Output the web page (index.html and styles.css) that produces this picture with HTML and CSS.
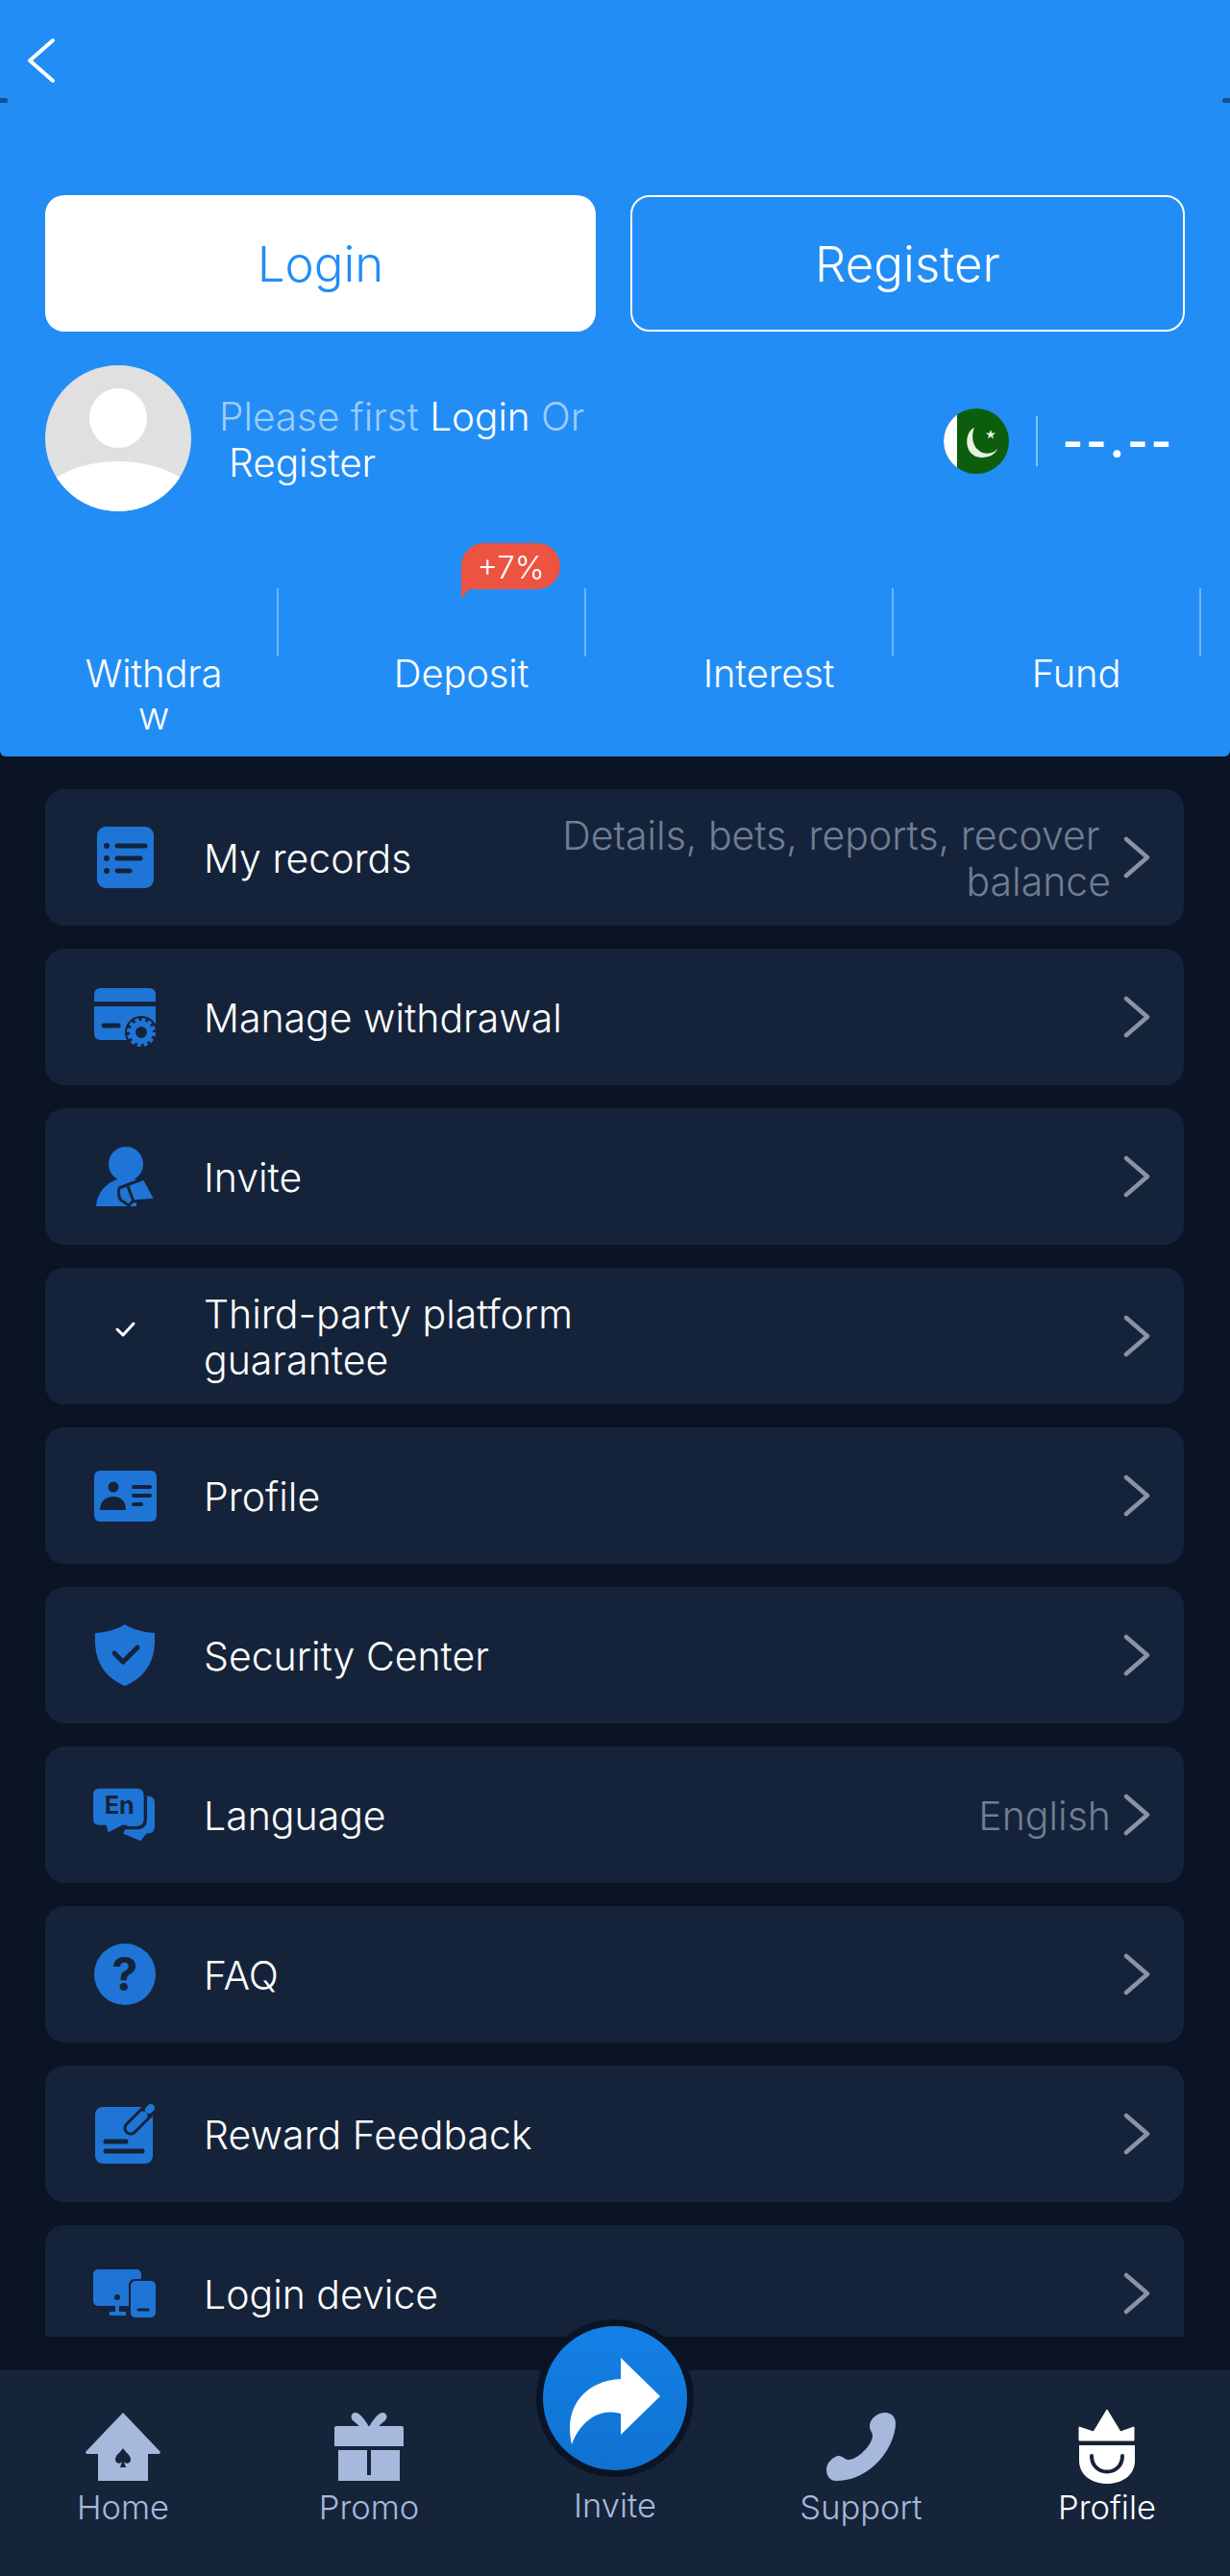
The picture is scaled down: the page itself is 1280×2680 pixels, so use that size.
FILE: index.html
```html
<!DOCTYPE html>
<html>
<head>
    <meta charset="utf-8">
    <title>Profile</title>
    <link rel="stylesheet" href="styles.css">
</head>
<body>
<div class="page">
    <header class="head">
        <span class="notch notch-left"></span>
        <span class="notch notch-right"></span>
        <div class="backbar">
            <svg class="back" viewBox="0 0 32 48" fill="none" stroke="#fff" stroke-width="4" stroke-linecap="round" stroke-linejoin="round"><path d="M28 3 L4 24 L28 45"/></svg>
        </div>
        <div class="auth">
            <button class="btn btn-login">Login</button>
            <button class="btn btn-register">Register</button>
        </div>
        <div class="user">
            <svg class="avatar" viewBox="0 0 152 152">
                <defs><clipPath id="avclip"><circle cx="76" cy="76" r="76"/></clipPath></defs>
                <circle cx="76" cy="76" r="76" fill="#e0e0e0"/>
                <ellipse cx="76" cy="55" rx="30" ry="31" fill="#fff"/>
                <ellipse cx="76" cy="150" rx="86" ry="50" fill="#fff" clip-path="url(#avclip)"/>
            </svg>
            <p class="hint">Please first <a class="hint-link">Login</a> Or <a class="hint-link hint-reg">Register</a></p>
            <div class="wallet">
                <svg class="flag" viewBox="0 0 68 68">
                    <defs><clipPath id="flagclip"><circle cx="34" cy="34" r="34"/></clipPath></defs>
                    <g clip-path="url(#flagclip)">
                        <rect width="68" height="68" fill="#0d5e0c"/>
                        <rect width="14" height="68" fill="#fff"/>
                        <path d="M32 20 C21 24 20 51 40 51 C48 51 54 47 56 42 C50 48 42 48 37 44 C29 38 29 27 32 20 Z" fill="#e6f2e2"/>
                        <path d="M49 22 L50.200 25.600 L54 25.600 L51 27.900 L52.100 31.500 L49 29.300 L45.900 31.500 L47 27.900 L44 25.600 L47.800 25.600 Z" fill="#e6f2e2"/>
                    </g>
                </svg>
                <span class="wallet-line"></span>
                <span class="amount">--.--</span>
            </div>
        </div>
        <div class="stats">
            <div class="stat"><span class="stat-name">Withdraw</span></div>
            <div class="stat">
                <span class="stat-name">Deposit</span>
                <span class="badge">+7%</span>
            </div>
            <div class="stat"><span class="stat-name">Interest</span></div>
            <div class="stat"><span class="stat-name">Fund</span></div>
        </div>
    </header>

    <main class="list">
        <div class="row">
            <svg class="row-icon" viewBox="0 0 64 64">
                <rect x="3" y="0" width="59" height="64" rx="9" fill="#1f75d6"/>
                <g fill="#14233a"><circle cx="13" cy="20" r="3"/><circle cx="13" cy="33" r="3"/><circle cx="13" cy="46" r="3"/></g>
                <g stroke="#14233a" stroke-width="5" stroke-linecap="round"><path d="M24 20 H53"/><path d="M24 33 H48"/><path d="M24 46 H37"/></g>
            </svg>
            <span class="row-name">My records</span>
            <span class="row-note row-note-wide">Details, bets, reports, recover&nbsp;<br>balance</span>
            <svg class="chev" viewBox="0 0 28 44" fill="none"><path d="M3 3 L25 22 L3 41"/></svg>
        </div>
        <div class="row">
            <svg class="row-icon" viewBox="0 0 64 64">
                <path d="M0 16 V9 Q0 2 7 2 H57 Q64 2 64 9 V16 Z" fill="#1f75d6"/>
                <path d="M0 21 H64 V56 H7 Q0 56 0 49 Z" fill="#1f75d6"/>
                <path d="M10 41 H25" stroke="#14233a" stroke-width="5" stroke-linecap="round"/>
                <circle cx="49" cy="48" r="17" fill="#14233a"/>
                <circle cx="49" cy="48" r="9" fill="none" stroke="#1f75d6" stroke-width="6"/>
                <circle cx="49" cy="48" r="13" fill="none" stroke="#1f75d6" stroke-width="4" stroke-dasharray="4 2.800"/>
            </svg>
            <span class="row-name">Manage withdrawal</span>
            <svg class="chev" viewBox="0 0 28 44" fill="none"><path d="M3 3 L25 22 L3 41"/></svg>
        </div>
        <div class="row">
            <svg class="row-icon" viewBox="0 0 64 64">
                <circle cx="33" cy="19" r="18" fill="#1f75d6"/>
                <path d="M2 63 C3 49 12 39 24 35 H44 V63 Z" fill="#1f75d6"/>
                <path d="M26 44 L52 34 L64 56 L40 58 L36 62 L30 58 C25 56 25 48 26 44 Z" fill="#1f75d6" stroke="#14233a" stroke-width="3" stroke-linejoin="round"/>
                <path d="M35 42 L41 58 M45 58 L49 65" stroke="#14233a" stroke-width="3" fill="none"/>
            </svg>
            <span class="row-name">Invite</span>
            <svg class="chev" viewBox="0 0 28 44" fill="none"><path d="M3 3 L25 22 L3 41"/></svg>
        </div>
        <div class="row">
            <svg class="row-icon" viewBox="0 0 64 64" fill="none"><path d="M24 25 L30 31 L41 19" stroke="#fff" stroke-width="3" stroke-linecap="round" stroke-linejoin="round"/></svg>
            <span class="row-name row-name-narrow">Third-party platform guarantee</span>
            <svg class="chev" viewBox="0 0 28 44" fill="none"><path d="M3 3 L25 22 L3 41"/></svg>
        </div>
        <div class="row">
            <svg class="row-icon" viewBox="0 0 64 64">
                <rect x="0" y="6" width="65" height="53" rx="6" fill="#1f75d6"/>
                <circle cx="20" cy="23" r="5.500" fill="#14233a"/>
                <path d="M6 47 C6 37 13 33 20 33 C27 33 33 37 33 47 Z" fill="#14233a"/>
                <g stroke="#14233a" stroke-width="4" stroke-linecap="round"><path d="M41 23 H58"/><path d="M41 32 H58"/><path d="M41 41 H49"/></g>
            </svg>
            <span class="row-name">Profile</span>
            <svg class="chev" viewBox="0 0 28 44" fill="none"><path d="M3 3 L25 22 L3 41"/></svg>
        </div>
        <div class="row">
            <svg class="row-icon" viewBox="0 0 64 64">
                <path d="M32 0 C40 5 50 8 63 9 C64 30 60 52 32 64 C4 52 0 30 1 9 C14 8 24 5 32 0 Z" fill="#1f75d6"/>
                <path d="M21 30 L30 39 L45 24" fill="none" stroke="#14233a" stroke-width="5" stroke-linecap="round" stroke-linejoin="round"/>
            </svg>
            <span class="row-name">Security Center</span>
            <svg class="chev" viewBox="0 0 28 44" fill="none"><path d="M3 3 L25 22 L3 41"/></svg>
        </div>
        <div class="row">
            <svg class="row-icon" viewBox="0 0 66 64">
                <path d="M52 12 H57 Q65 12 65 20 V44 Q65 52 57 52 H56 L50 60 L31 52 Z" fill="#1f75d6"/>
                <path d="M5 4 H46 Q53 4 53 11 V36 Q53 43 46 43 H30 L15 51 L13 43 H5 Q-1 43 -1 36 V11 Q-1 4 5 4 Z" fill="#1f75d6"/>
                <path d="M55 12 V36 Q55 46 45 46 H32 L22 51" fill="none" stroke="#14233a" stroke-width="3.500"/>
                <text class="icon-text" x="11" y="31">En</text>
            </svg>
            <span class="row-name">Language</span>
            <span class="row-note">English</span>
            <svg class="chev" viewBox="0 0 28 44" fill="none"><path d="M3 3 L25 22 L3 41"/></svg>
        </div>
        <div class="row">
            <svg class="row-icon" viewBox="0 0 64 64">
                <circle cx="32" cy="32" r="32" fill="#1f75d6"/>
                <text class="icon-text icon-q" x="32" y="49">?</text>
            </svg>
            <span class="row-name">FAQ</span>
            <svg class="chev" viewBox="0 0 28 44" fill="none"><path d="M3 3 L25 22 L3 41"/></svg>
        </div>
        <div class="row">
            <svg class="row-icon" viewBox="0 0 64 64">
                <rect x="1" y="4" width="60" height="59" rx="8" fill="#1f75d6"/>
                <path d="M38 26 L55 9" stroke="#14233a" stroke-width="15" stroke-linecap="round"/>
                <path d="M38 26 L51 13" stroke="#1f75d6" stroke-width="9" stroke-linecap="round"/>
                <path d="M57 7 L59 5" stroke="#1f75d6" stroke-width="8" stroke-linecap="round"/>
                <g stroke="#14233a" stroke-width="5" stroke-linecap="round"><path d="M12 40 H33"/><path d="M12 50 H50"/></g>
            </svg>
            <span class="row-name">Reward Feedback</span>
            <svg class="chev" viewBox="0 0 28 44" fill="none"><path d="M3 3 L25 22 L3 41"/></svg>
        </div>
        <div class="row">
            <svg class="row-icon" viewBox="0 0 64 64">
                <rect x="-1" y="7" width="50" height="38" rx="5" fill="#1f75d6"/>
                <path d="M24 45 V52 M16 53 H33" stroke="#1f75d6" stroke-width="4"/>
                <circle cx="24" cy="36" r="3" fill="#14233a"/>
                <rect x="36" y="17" width="30" height="42" rx="6" fill="#14233a"/>
                <rect x="38" y="19" width="26" height="38" rx="5" fill="#1f75d6"/>
                <path d="M46 49 H56" stroke="#14233a" stroke-width="3" stroke-linecap="round"/>
            </svg>
            <span class="row-name">Login device</span>
            <svg class="chev" viewBox="0 0 28 44" fill="none"><path d="M3 3 L25 22 L3 41"/></svg>
        </div>
    </main>

    <nav class="tabs">
        <div class="tab">
            <svg class="tab-icon" viewBox="0 0 80 72">
                <path d="M40 0 L79 41 Q79 43 77 43 H66 V71 H14 V43 H3 Q1 43 1 41 Z" fill="#a6b8dc"/>
                <path d="M40 37 C43 42 48 44 48 49 C48 53 43 54 41 51 L43 57 H37 L39 51 C37 54 32 53 32 49 C32 44 37 42 40 37 Z" fill="#16243a"/>
            </svg>
            <span class="tab-name">Home</span>
        </div>
        <div class="tab">
            <svg class="tab-icon" viewBox="0 0 80 72">
                <path d="M31 15 L23 8 C19 3 24 -2 29 1 C33 4 37 9 40 15 C43 9 47 4 51 1 C56 -2 61 3 57 8 L49 15 Z" fill="#a6b8dc"/>
                <path d="M4 16 Q4 14 6 14 H74 Q76 14 76 16 V35 H4 Z" fill="#a6b8dc"/>
                <path d="M8 39 H38 V65 H42 V39 H72 V71 H8 Z" fill="#a6b8dc"/>
            </svg>
            <span class="tab-name">Promo</span>
        </div>
        <div class="tab tab-invite">
            <span class="tab-name">Invite</span>
        </div>
        <div class="tab">
            <svg class="tab-icon" viewBox="0 0 80 72">
                <path d="M65 0 C72 0 76 5 76 11 C76 34 52 71 14 71 C7 71 4 65 4 59 C4 52 12 45 17 45 C21 45 23 49 27 49 C37 49 52 33 52 24 C52 20 49 19 49 14 C49 6 58 0 65 0 Z" fill="#a6b8dc"/>
            </svg>
            <span class="tab-name">Support</span>
        </div>
        <div class="tab tab-on">
            <svg class="tab-icon tab-icon-tall" viewBox="0 0 80 78">
                <path d="M40 0 L54 23 L68 18 V32 H11 V18 L26 23 Z" fill="#fff" stroke="#fff" stroke-linejoin="round"/>
                <path d="M11 37 H69 V53 C69 68 56 77 40 77 C24 77 11 68 11 53 Z" fill="#fff"/>
                <path d="M24 48 C24 70 56 70 56 48" fill="none" stroke="#16243a" stroke-width="4" stroke-linecap="round"/>
            </svg>
            <span class="tab-name">Profile</span>
        </div>
    </nav>

    <div class="invite-btn">
        <svg viewBox="0 0 150 150"><path d="M30 123 C21 85 43 57 81 55 V33 L122 73 L81 113 V91 C60 85 40 97 30 123 Z" fill="#fff"/></svg>
    </div>
</div>
</body>
</html>
```

FILE: styles.css
```css
*{
    box-sizing: border-box;
}
body{
    margin: 0;
    background-color: #0a1424;
    font-family: Inter, "Liberation Sans", sans-serif;
    color: #fff;
}
.page{
    position: relative;
    width: 1280px;
    height: 2680px;
    display: flex;
    flex-direction: column;
    overflow: hidden;
}

/* blue top part */
.head{
    position: relative;
    height: 787px;
    flex: none;
    background-color: #228df5;
    border-radius: 0 0 6px 6px;
}
.notch{
    position: absolute;
    top: 102px;
    width: 8px;
    height: 5px;
    background-color: #16508f;
}
.notch-left{
    left: 0;
    border-radius: 0 3px 3px 0;
}
.notch-right{
    right: 0;
    border-radius: 3px 0 0 3px;
}
.backbar{
    height: 203px;
    padding: 39px 0 0 27px;
}
.back{
    display: block;
    width: 32px;
    height: 48px;
}
.auth{
    display: flex;
    gap: 36px;
    padding: 0 47px;
}
.btn{
    flex: 1;
    height: 142px;
    border-radius: 20px;
    font-family: inherit;
    font-size: 51px;
    font-weight: 300;
}
.btn-login{
    background-color: #fff;
    color: #228df5;
    border: none;
}
.btn-register{
    background-color: transparent;
    color: #fff;
    border: 2px solid #fff;
}
.user{
    display: flex;
    align-items: center;
    height: 152px;
    margin-top: 35px;
    padding-left: 47px;
}
.avatar{
    width: 152px;
    height: 152px;
    flex: none;
}
.hint{
    width: 400px;
    margin: 3px 0 0 29px;
    font-size: 40.500px;
    font-weight: 300;
    line-height: 48px;
    color: #9ccbfa;
}
.hint-link{
    color: #fff;
}
.hint-reg{
    margin-left: 10px;
}
.wallet{
    display: flex;
    align-items: center;
    margin: 6px 0 0 auto;
    padding-right: 58px;
}
.flag{
    width: 68px;
    height: 68px;
}
.wallet-line{
    width: 2px;
    height: 52px;
    margin: 0 26px 0 28px;
    background-color: rgba(255, 255, 255, 0.45);
}
.amount{
    font-size: 46px;
    font-weight: 700;
    letter-spacing: 3px;
}
.stats{
    display: grid;
    grid-template-columns: repeat(4, 320px);
    margin-top: 80px;
}
.stat{
    position: relative;
    height: 155px;
    display: flex;
    justify-content: center;
}
.stat::after{
    content: "";
    position: absolute;
    top: 0;
    right: 30px;
    width: 2px;
    height: 71px;
    background-color: rgba(255, 255, 255, 0.35);
}
.stat-name{
    width: 160px;
    margin-top: 67px;
    font-size: 40px;
    font-weight: 300;
    letter-spacing: -0.200px;
    line-height: 44px;
    text-align: center;
    word-break: break-all;
}
.badge{
    position: absolute;
    left: 160px;
    top: -47px;
    width: 103px;
    height: 48px;
    background-color: #ec5340;
    border-radius: 24px 24px 24px 0;
    font-size: 33px;
    font-weight: 300;
    line-height: 50px;
    text-align: center;
}
.badge::after{
    content: "";
    position: absolute;
    left: 0;
    top: 40px;
    border-top: 18px solid #ec5340;
    border-right: 14px solid transparent;
}

/* menu */
.list{
    flex: 1;
    min-height: 0;
    overflow: hidden;
    margin: 34px 48px 35px 47px;
    display: flex;
    flex-direction: column;
    gap: 24px;
}
.row{
    flex: none;
    height: 142px;
    display: flex;
    align-items: center;
    padding: 0 35px 0 51px;
    background-color: #15233a;
    border-radius: 20px;
}
.row-icon{
    width: 64px;
    height: 64px;
    flex: none;
    overflow: visible;
}
.row-name{
    margin: 2px 0 0 50px;
    font-size: 41px;
    font-weight: 350;
    line-height: 48px;
}
.row-name-narrow{
    width: 420px;
}
.row-note{
    margin: 2px 0 0 auto;
    font-size: 41px;
    font-weight: 300;
    line-height: 48px;
    color: #6f7e94;
    text-align: right;
}
.row-note-wide{
    width: 600px;
}
.chev{
    width: 28px;
    height: 44px;
    flex: none;
    margin-left: 13px;
    stroke: #8a93a1;
    stroke-width: 4.500;
    stroke-linecap: round;
    stroke-linejoin: round;
}
.row-name + .chev{
    margin-left: auto;
}
.icon-text{
    font-family: Inter, sans-serif;
    font-size: 26px;
    font-weight: 700;
    fill: #14233a;
}
.icon-q{
    font-size: 48px;
    text-anchor: middle;
}

/* bottom bar */
.tabs{
    flex: none;
    height: 214px;
    display: grid;
    grid-template-columns: repeat(5, 256px);
    background-color: #16243a;
}
.tab{
    display: flex;
    flex-direction: column;
    align-items: center;
    padding-top: 44px;
    color: #a6b8dc;
}
.tab-on{
    color: #fff;
    padding-top: 41px;
}
.tab-icon{
    width: 80px;
    height: 72px;
    flex: none;
}
.tab-icon-tall{
    height: 78px;
}
.tab-name{
    margin-top: 6px;
    font-size: 34.500px;
    font-weight: 300;
    line-height: 42px;
}
.tab-on .tab-name{
    margin-top: 3px;
}
.tab-invite{
    justify-content: flex-end;
    padding-bottom: 52px;
}
.invite-btn{
    position: absolute;
    left: 558px;
    top: 2413px;
    width: 164px;
    height: 164px;
    padding: 7px;
    border-radius: 50%;
    background-color: #0a1424;
}
.invite-btn svg{
    display: block;
    width: 150px;
    height: 150px;
    border-radius: 50%;
    background: linear-gradient(#1480e6, #0f72d2);
}
```
